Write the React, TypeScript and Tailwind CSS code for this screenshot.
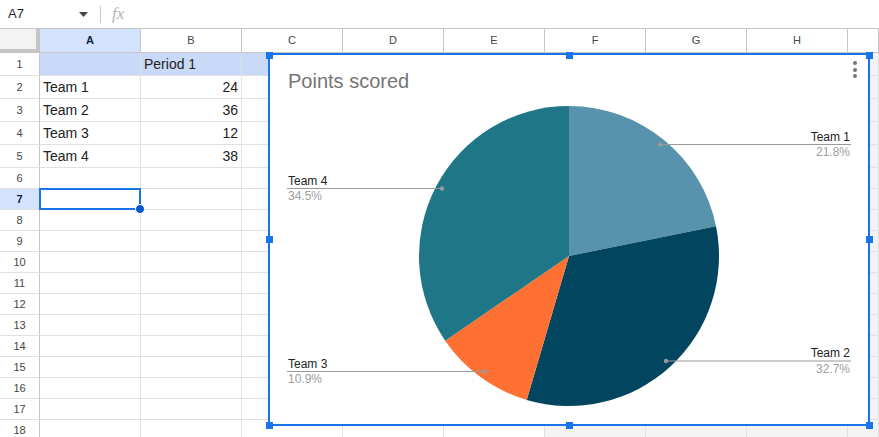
import React from "react";

const COLS = ["A", "B", "C", "D", "E", "F", "G", "H", ""];

type Cell = { text?: string; align?: "left" | "right" };

const DATA: Record<number, Cell[]> = {
  1: [{ text: "" }, { text: "Period 1" }],
  2: [{ text: "Team 1" }, { text: "24", align: "right" }],
  3: [{ text: "Team 2" }, { text: "36", align: "right" }],
  4: [{ text: "Team 3" }, { text: "12", align: "right" }],
  5: [{ text: "Team 4" }, { text: "38", align: "right" }],
};

function FormulaBar() {
  return (
    <div className="flex h-[29px] items-center border-b border-[#c7c7c7] bg-white">
      <div className="flex w-[100px] items-center justify-between pl-[8px] pr-[12px]">
        <span className="text-[13px] text-[#1f1f1f]">A7</span>
        <svg width="9" height="5" viewBox="0 0 9 5">
          <path d="M0 0 L9 0 L4.5 5 Z" fill="#444746" />
        </svg>
      </div>
      <div className="h-[17px] w-px bg-[#c7c7c7]" />
      <span className="ml-[11px] font-['Liberation_Serif',serif] text-[17px] italic text-[#b4b4b4]">
        fx
      </span>
    </div>
  );
}

function HeaderRow() {
  return (
    <div className="grid h-[24px] grid-cols-[40px_repeat(8,101px)_1fr]">
      <div className="border-b-[4px] border-r-[4px] border-[#c4c4c4] bg-[#f3f3f3]" />
      {COLS.map((c, i) => (
        <div
          key={i}
          className={
            i === 0
              ? "flex items-center justify-center border-b border-r border-[#c4c7c5] bg-[#d3e3fd] text-[11px] font-bold text-[#0b1f44]"
              : "flex items-center justify-center border-b border-r border-[#c4c7c5] bg-white text-[11px] text-[#444746]"
          }
        >
          {c}
        </div>
      ))}
    </div>
  );
}

function Row({ n }: { n: number }) {
  const h = n <= 5 ? "h-[23px]" : "h-[21px]";
  const cells = DATA[n] || [];
  return (
    <div className={`grid ${h} grid-cols-[40px_repeat(8,101px)_1fr]`}>
      <div
        className={
          n === 7
            ? "flex items-center justify-center border-b border-r border-b-[#e1e1e1] border-r-[#c4c7c5] bg-[#d3e3fd] text-[11px] font-bold text-[#0b1f44]"
            : "flex items-center justify-center border-b border-r border-b-[#e1e1e1] border-r-[#c4c7c5] bg-white text-[11px] text-[#444746]"
        }
      >
        {n}
      </div>
      {COLS.map((c, i) => {
        const cell = cells[i];
        let bg = "bg-white";
        if (n === 1) bg = "bg-[#c9daf8]";
        if (i === 8) bg = "bg-[#f3f3f3]";
        if (n === 18 && i >= 5) bg = "bg-[#f3f3f3]";
        const align = cell?.align === "right" ? "justify-end" : "justify-start";
        return (
          <div
            key={i}
            className={`flex items-center ${align} overflow-hidden whitespace-nowrap border-b border-r border-[#e1e1e1] px-[3px] text-[14px] text-[#222222] ${bg}`}
          >
            {cell?.text}
          </div>
        );
      })}
    </div>
  );
}

const CX = 569;
const CY = 256;

function Pie() {
  const slices = [
    { d: `M${CX},${CY} L569,106 A150,150 0 0 1 716.01,226.2 Z`, fill: "#5892ad" },
    { d: `M${CX},${CY} L716.01,226.2 A150,150 0 0 1 526.74,399.92 Z`, fill: "#01455f" },
    { d: `M${CX},${CY} L526.74,399.92 A150,150 0 0 1 445.16,340.63 Z`, fill: "#ff7033" },
    { d: `M${CX},${CY} L445.16,340.63 A150,150 0 0 1 569,106 Z`, fill: "#1e7686" },
  ];
  const font = "Liberation Sans, Arial, sans-serif";
  return (
    <svg
      className="absolute inset-0"
      width="598"
      height="369"
      viewBox="270 55 598 369"
    >
      {slices.map((s, i) => (
        <path key={i} d={s.d} fill={s.fill} />
      ))}
      <g stroke="#9a9a9a" strokeWidth="1.2">
        <line x1="660" y1="144.5" x2="851" y2="144.5" />
        <line x1="666" y1="361" x2="851" y2="361" />
        <line x1="287" y1="188.5" x2="442" y2="188.5" />
        <line x1="287" y1="371.5" x2="485" y2="371.5" />
      </g>
      <g fill="#9a9a9a">
        <circle cx="660" cy="144.5" r="2.2" />
        <circle cx="666" cy="361" r="2.2" />
        <circle cx="442" cy="188.5" r="2.2" />
        <circle cx="485" cy="371.5" r="2.2" />
      </g>
      <g fontFamily={font} fontSize="12">
        <text x="850" y="141" textAnchor="end" fill="#222222">Team 1</text>
        <text x="850" y="156" textAnchor="end" fill="#9e9e9e">21.8%</text>
        <text x="850" y="357" textAnchor="end" fill="#222222">Team 2</text>
        <text x="850" y="373" textAnchor="end" fill="#9e9e9e">32.7%</text>
        <text x="288" y="185" fill="#222222">Team 4</text>
        <text x="288" y="200" fill="#9e9e9e">34.5%</text>
        <text x="288" y="368" fill="#222222">Team 3</text>
        <text x="288" y="383" fill="#9e9e9e">10.9%</text>
      </g>
    </svg>
  );
}

function Chart() {
  return (
    <div className="absolute left-[268px] top-[53px] h-[373px] w-[602px] border-2 border-[#1a73e8] bg-white">
      <Pie />
      <div className="absolute left-[18px] top-[14px] text-[20px] leading-[24px] text-[#757575]">
        Points scored
      </div>
      <div className="absolute right-[11px] top-[6px] flex flex-col items-center gap-[2.5px]">
        <div className="h-[4px] w-[4px] rounded-full bg-[#757575]" />
        <div className="h-[4px] w-[4px] rounded-full bg-[#757575]" />
        <div className="h-[4px] w-[4px] rounded-full bg-[#757575]" />
      </div>
    </div>
  );
}

function Handles() {
  const xs = [266, 566, 866];
  const ys = [52, 236, 422];
  const pts: [number, number][] = [];
  for (const x of xs)
    for (const y of ys) if (!(x === 566 && y === 236)) pts.push([x, y]);
  return (
    <>
      {pts.map(([x, y]) => (
        <div
          key={`${x}-${y}`}
          className="absolute h-[7px] w-[7px] bg-[#1a73e8]"
          style={{ left: x, top: y }}
        />
      ))}
    </>
  );
}

export default function App() {
  const rows = Array.from({ length: 18 }, (_, i) => i + 1);
  return (
    <div className="relative h-[437px] w-[879px] overflow-hidden bg-white font-['Liberation_Sans',Arial,sans-serif]">
      <FormulaBar />
      <HeaderRow />
      {rows.map((n) => (
        <Row key={n} n={n} />
      ))}
      <div className="absolute left-[39px] top-[188px] h-[22px] w-[102px] border-2 border-[#1a73e8]" />
      <div className="absolute left-[135px] top-[204px] h-[10px] w-[10px] rounded-full border border-white bg-[#0b57d0]" />
      <Chart />
      <Handles />
    </div>
  );
}
